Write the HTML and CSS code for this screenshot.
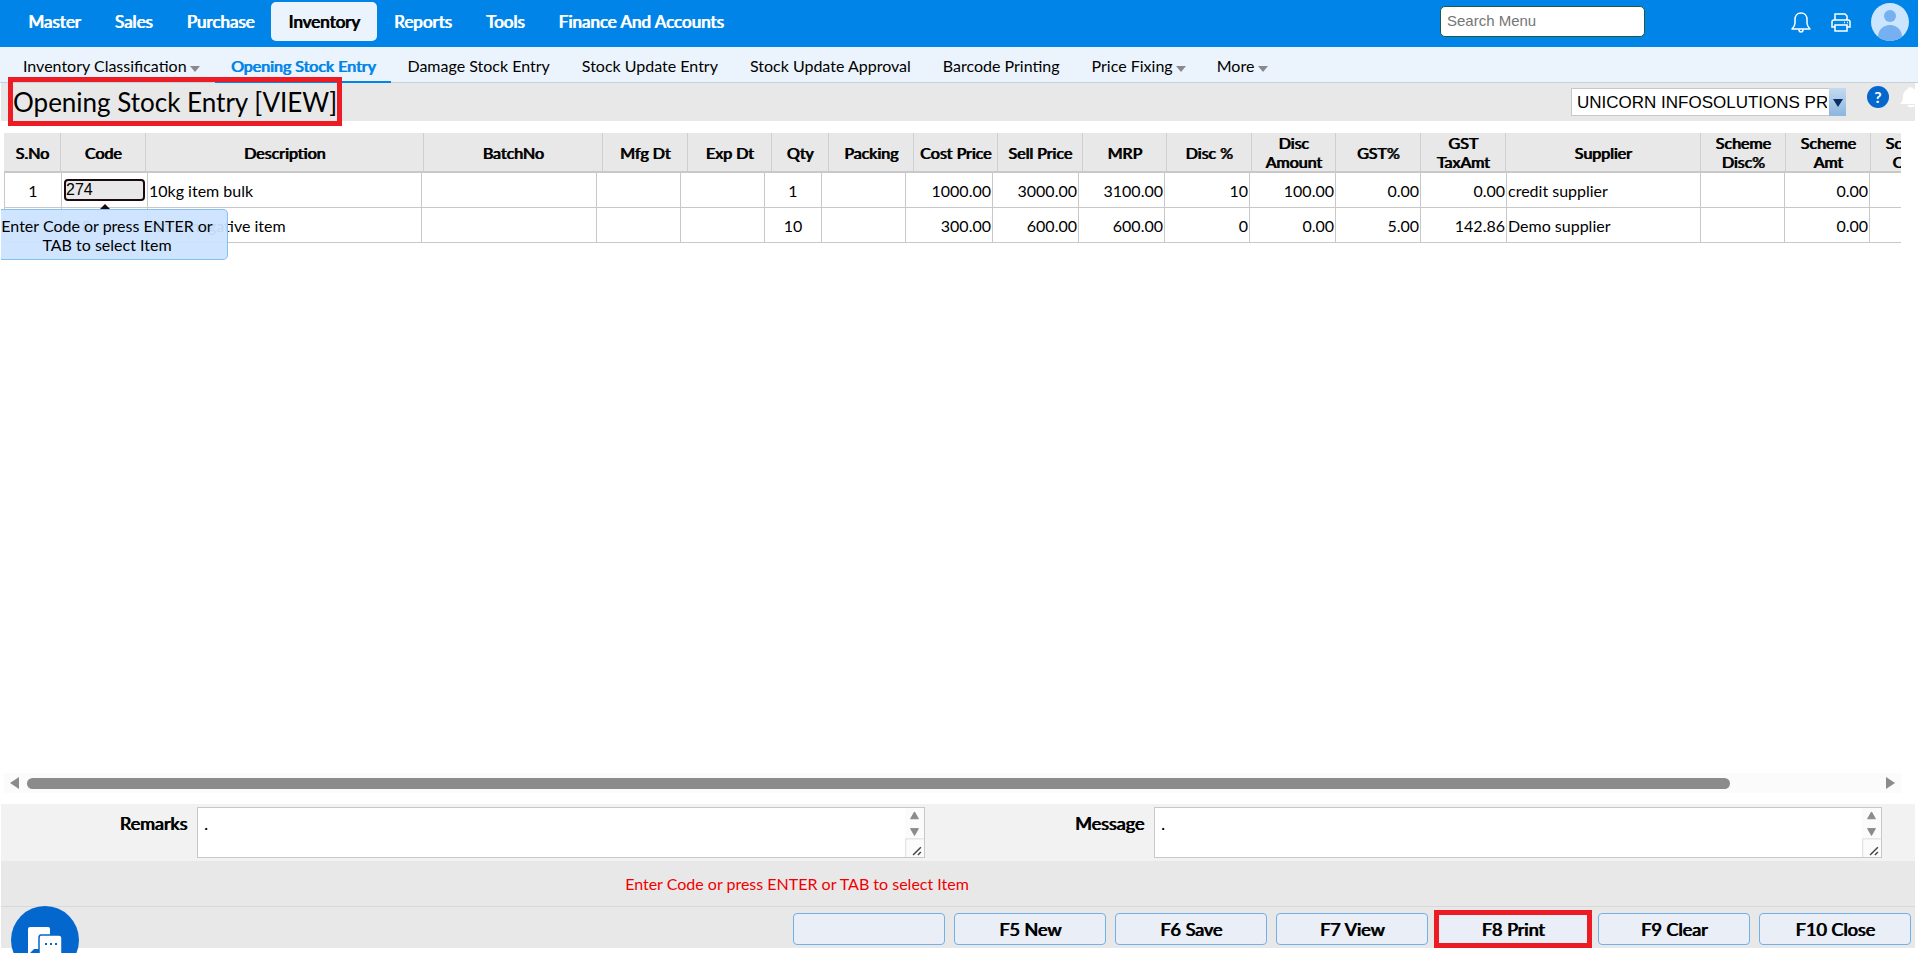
FILE: index.html
```html
<!DOCTYPE html>
<html lang="en">
<head>
  <meta charset="UTF-8">
  <title>Opening Stock Entry</title>
  <link rel="stylesheet" href="styles.css">
</head>
<body>

<header class="topbar">
  <nav class="main-menu">
    <a href="#">Master</a>
    <a href="#">Sales</a>
    <a href="#">Purchase</a>
    <a href="#" class="active">Inventory</a>
    <a href="#">Reports</a>
    <a href="#">Tools</a>
    <a href="#">Finance And Accounts</a>
  </nav>
  <input type="text" class="search" placeholder="Search Menu" aria-label="Search Menu">
  <div class="top-icons">
    <button type="button" class="icon-btn" aria-label="Notifications">
      <svg width="20" height="21" viewBox="0 0 20 21" fill="none" stroke="#fff" stroke-width="1.5" stroke-linejoin="round">
        <path d="M1 17h18c-2-2-3-3.500-3-6V7.500C16 3.500 13.500 1 10 1S4 3.500 4 7.500V11c0 2.500-1 4-3 6z"/>
        <path d="M8 17.500c0 1.500 1 2.500 2 2.500s2-1 2-2.500"/>
      </svg>
    </button>
    <button type="button" class="icon-btn" aria-label="Print">
      <svg width="20" height="19" viewBox="0 0 20 19" fill="none" stroke="#fff" stroke-width="1.500">
        <path d="M4 7V1h10l2 2v4"/>
        <path d="M4 14H1V9c0-1 1-2 2-2h14c1 0 2 1 2 2v5h-3"/>
        <path d="M4 12h12v6H4z"/>
        <path d="M13 9.500h1M16 9.500h1"/>
      </svg>
    </button>
    <button type="button" class="icon-btn" aria-label="Profile">
      <svg width="38" height="38" viewBox="0 0 38 38">
        <defs><clipPath id="face"><circle cx="19" cy="19" r="19"/></clipPath></defs>
        <circle cx="19" cy="19" r="19" fill="#cce5fe"/>
        <g fill="#76b0f0" clip-path="url(#face)">
          <circle cx="19" cy="13" r="6"/>
          <path d="M7 38v-4c0-7 5-12 12-12s12 5 12 12v4z"/>
        </g>
      </svg>
    </button>
  </div>
</header>

<nav class="sub-menu">
  <a href="#">Inventory Classification <i class="caret"></i></a>
  <a href="#" class="active">Opening Stock Entry</a>
  <a href="#">Damage Stock Entry</a>
  <a href="#">Stock Update Entry</a>
  <a href="#">Stock Update Approval</a>
  <a href="#">Barcode Printing</a>
  <a href="#">Price Fixing <i class="caret"></i></a>
  <a href="#">More <i class="caret"></i></a>
</nav>

<div class="title-bar">
  <h1>Opening Stock Entry [VIEW]</h1>
  <div class="company">
    <select aria-label="Company">
      <option>UNICORN INFOSOLUTIONS PRIVATE LIMITED</option>
    </select>
    <span class="company-arrow"></span>
  </div>
  <button type="button" class="help" aria-label="Help">?</button>
  <svg class="alert-bell" width="15" height="22" viewBox="0 0 15 22" fill="#fff">
    <path d="M0 18c2-2 3-4 3-7 0-4 2-7 5-8 0-2 3-3 4-1 2 1 3 1 3 2v14z"/>
    <path d="M7 19h8v1c-2 2-7 2-8-1z"/>
  </svg>
</div>

<main class="grid-area">
  <div class="grid">
    <table class="grid-head">
      <colgroup>
        <col style="width:57px"><col style="width:85px"><col style="width:278px"><col style="width:179px"><col style="width:85px"><col style="width:84px"><col style="width:57px"><col style="width:85px"><col style="width:84px"><col style="width:85px"><col style="width:84px"><col style="width:85px"><col style="width:84px"><col style="width:85px"><col style="width:85px"><col style="width:195px"><col style="width:85px"><col style="width:85px"><col style="width:85px">
      </colgroup>
      <tr>
        <th>S.No</th>
        <th>Code</th>
        <th>Description</th>
        <th>BatchNo</th>
        <th>Mfg Dt</th>
        <th>Exp Dt</th>
        <th>Qty</th>
        <th>Packing</th>
        <th>Cost Price</th>
        <th>Sell Price</th>
        <th>MRP</th>
        <th>Disc %</th>
        <th>Disc Amount</th>
        <th>GST%</th>
        <th>GST TaxAmt</th>
        <th>Supplier</th>
        <th>Scheme Disc%</th>
        <th>Scheme Amt</th>
        <th>Scheme Other</th>
      </tr>
    </table>
    <table class="grid-body">
      <colgroup>
        <col style="width:58px"><col style="width:86px"><col style="width:274px"><col style="width:175px"><col style="width:84px"><col style="width:84px"><col style="width:57px"><col style="width:84px"><col style="width:87px"><col style="width:86px"><col style="width:86px"><col style="width:85px"><col style="width:86px"><col style="width:85px"><col style="width:86px"><col style="width:194px"><col style="width:84px"><col style="width:85px"><col style="width:85px">
      </colgroup>
      <tr>
        <td class="center">1</td>
        <td class="code-cell">
          <input type="text" class="code" value="274" aria-label="Code" autofocus>
          <div class="tooltip">Enter Code or press ENTER or TAB to select Item</div>
        </td>
        <td>10kg item bulk</td>
        <td></td>
        <td></td>
        <td></td>
        <td class="center">1</td>
        <td></td>
        <td class="num">1000.00</td>
        <td class="num">3000.00</td>
        <td class="num">3100.00</td>
        <td class="num">10</td>
        <td class="num">100.00</td>
        <td class="num">0.00</td>
        <td class="num">0.00</td>
        <td>credit supplier</td>
        <td></td>
        <td class="num">0.00</td>
        <td></td>
      </tr>
      <tr>
        <td class="center">2</td>
        <td>358</td>
        <td>stock negative item</td>
        <td></td>
        <td></td>
        <td></td>
        <td class="center">10</td>
        <td></td>
        <td class="num">300.00</td>
        <td class="num">600.00</td>
        <td class="num">600.00</td>
        <td class="num">0</td>
        <td class="num">0.00</td>
        <td class="num">5.00</td>
        <td class="num">142.86</td>
        <td>Demo supplier</td>
        <td></td>
        <td class="num">0.00</td>
        <td></td>
      </tr>
    </table>
  </div>
  <div class="scrollbar">
    <i class="arrow-left"></i>
    <div class="track"><div class="thumb"></div></div>
    <i class="arrow-right"></i>
  </div>
</main>

<footer>
  <div class="notes">
    <div class="note">
      <label for="remarks">Remarks</label>
      <div class="note-box">
        <textarea id="remarks">.</textarea>
        <svg class="note-scroll" width="19" height="50" viewBox="0 0 19 50">
          <path d="M0 0h19v50H0z" fill="#fbfbfb"/>
          <path d="M9.500 4l4 7h-8zM9.500 28l4-7h-8z" fill="#8b8b8b" stroke="#8b8b8b" stroke-linejoin="round"/>
          <path d="M.5 50V31.500H19" fill="none" stroke="#dcdcdc"/>
          <path d="M8 48l8-8M13 48l3-3" stroke="#444" stroke-width="1.500"/>
        </svg>
      </div>
    </div>
    <div class="note">
      <label for="message">Message</label>
      <div class="note-box">
        <textarea id="message">.</textarea>
        <svg class="note-scroll" width="19" height="50" viewBox="0 0 19 50">
          <path d="M0 0h19v50H0z" fill="#fbfbfb"/>
          <path d="M9.500 4l4 7h-8zM9.500 28l4-7h-8z" fill="#8b8b8b" stroke="#8b8b8b" stroke-linejoin="round"/>
          <path d="M.5 50V31.500H19" fill="none" stroke="#dcdcdc"/>
          <path d="M8 48l8-8M13 48l3-3" stroke="#444" stroke-width="1.500"/>
        </svg>
      </div>
    </div>
  </div>
  <div class="status">Enter Code or press ENTER or TAB to select Item</div>
  <div class="actions">
    <button type="button" aria-label="Empty"></button>
    <button type="button">F5 New</button>
    <button type="button">F6 Save</button>
    <button type="button">F7 View</button>
    <button type="button" class="marked">F8 Print</button>
    <button type="button">F9 Clear</button>
    <button type="button">F10 Close</button>
  </div>
</footer>

<button type="button" class="chat" aria-label="Chat">
  <svg width="36" height="40" viewBox="0 0 36 40">
    <path d="M3 0h18q2 0 2 2v20H7l-6 6V2q0-2 2-2z" fill="#fff"/>
    <path d="M14 8h18q3 0 3 3v26l-6-6H14q-2 0-2-2V11q0-3 2-3z" fill="#fff" stroke="#0367cd" stroke-width="1.500"/>
    <path d="M18 17h2M23 17h2M28 17h2" stroke="#0367cd" stroke-width="2"/>
  </svg>
</button>

</body>
</html>
```

FILE: styles.css
```css
* { box-sizing: border-box; }
body {
  margin: 0;
  height: 100vh;
  display: flex;
  flex-direction: column;
  overflow: hidden;
  font-family: Lato, "Liberation Sans", sans-serif;
  font-size: 16px;
  color: #000;
  background: #fff;
}
a { color: inherit; text-decoration: none; }
button { font-family: inherit; cursor: pointer; }

/* bold look on the regular face */
.main-menu a,
.sub-menu a.active,
.grid-head th,
.note label,
.actions button {
  font-weight: normal;
  text-shadow: 1px 0 0 currentColor;
}

/* top menu */
.topbar {
  display: flex;
  height: 47px;
  padding: 2px 9px 0 11px;
  background: #0084e8;
}
.main-menu { display: flex; flex: 1; }
.main-menu a {
  height: 39px;
  padding: 0 17px;
  line-height: 40px;
  font-size: 17px;
  color: #fff;
  border-radius: 5px;
}
.main-menu a.active { background: #ebf4fc; color: #000; }
.search {
  width: 205px;
  height: 31px;
  margin-top: 4px;
  padding: 0 6px 3px;
  border: 1px solid #1d5c3f;
  border-radius: 5px;
  font: 15px "Liberation Sans", Arial, sans-serif;
}
.top-icons {
  display: flex;
  align-items: center;
  gap: 20px;
  height: 40px;
  margin-left: 146px;
}
.icon-btn { display: flex; padding: 0; border: 0; background: none; }

/* second menu */
.sub-menu {
  display: flex;
  height: 36px;
  padding: 0 7px;
  background: #ebf4fc;
  border-bottom: 1px solid #c3d3de;
}
.sub-menu a {
  height: 36px;
  padding: 0 16px;
  line-height: 38px;
  font-size: 16px;
  white-space: nowrap;
}
.sub-menu a.active { color: #0084e8; border-bottom: 2px solid #0084e8; }
.caret {
  display: inline-block;
  margin: 0 -1px;
  border: 5px solid transparent;
  border-top: 6px solid #8a8a8e;
  border-bottom: 0;
}

/* title */
.title-bar {
  display: flex;
  height: 38px;
  margin: 0 3px 12px 1px;
  background: #e8e8e8;
}
h1 {
  position: relative;
  z-index: 1;
  margin: -6px auto -5px 7px;
  padding-top: 2px;
  border: 5px solid #ed1c24;
  line-height: 37px;
  font-size: 26px;
  font-weight: normal;
}
.company {
  position: relative;
  width: 275px;
  height: 28px;
  margin-top: 5px;
}
.company select {
  appearance: none;
  width: 100%;
  height: 28px;
  padding: 0 18px 0 5px;
  border: 1px solid #c8c8c8;
  border-radius: 0;
  background: #fff;
  font: 17px "Liberation Sans", Arial, sans-serif;
  color: #000;
}
.company-arrow {
  position: absolute;
  top: 0;
  right: 0;
  width: 17px;
  height: 28px;
  background: linear-gradient(#c3dbf0, #8db5df);
  pointer-events: none;
}
.company-arrow::after {
  content: "";
  position: absolute;
  top: 11px;
  left: 4px;
  border: 5px solid transparent;
  border-top: 8px solid #0c2f66;
  border-bottom: 0;
}
.help {
  width: 22px;
  height: 22px;
  margin: 3px 11px 0 21px;
  padding: 0;
  border: 0;
  border-radius: 50%;
  background: #0367cd;
  color: #fff;
  font-size: 16px;
  font-weight: bold;
  line-height: 22px;
}
.alert-bell { margin-top: 3px; }

/* item grid */
.grid-area {
  flex: 1;
  display: flex;
  flex-direction: column;
  margin: 0 17px 11px 0;
}
.grid { flex: 1; padding-left: 4px; overflow-x: clip; }
table {
  width: 1917px;
  table-layout: fixed;
  border-collapse: separate;
  border-spacing: 0;
}
.grid-head { background: #e8e8e8; border-bottom: 2px solid #c8c8c8; }
.grid-head th {
  height: 38px;
  padding: 0 4px;
  border-right: 1px solid #cfcfcf;
  font-size: 16px;
  line-height: 19px;
}
.grid-body td {
  height: 35px;
  padding: 0 1px;
  border: 1px solid #c8c8c8;
  border-width: 0 1px 1px 0;
  font-size: 16px;
  white-space: nowrap;
}
.grid-body td:first-child { border-left-width: 1px; }
.grid-body .center { text-align: center; }
.grid-body .num { text-align: right; }
.grid-body .code-cell { position: relative; padding: 0 2px; }
.code {
  display: block;
  width: 81px;
  height: 22px;
  padding: 0;
  border: 2px solid #1a0a0f;
  border-radius: 4px;
  outline: 0;
  background: #e8e8e8;
  font: 16px "Liberation Sans", Arial, sans-serif;
}
.tooltip {
  position: absolute;
  top: 36px;
  left: -61px;
  width: 227px;
  padding: 6px 14px 5px 0;
  border: 1px solid #85c0f0;
  border-left: 0;
  border-radius: 0 5px 5px 0;
  background: rgba(204, 227, 255, 0.94);
  line-height: 19px;
  text-align: center;
  white-space: normal;
}
.tooltip::before {
  content: "";
  position: absolute;
  top: -6px;
  left: 99px;
  border: 5px solid transparent;
  border-bottom: 5px solid #1a0a0f;
  border-top: 0;
}

.scrollbar {
  display: flex;
  align-items: center;
  height: 20px;
  margin-left: 4px;
  padding: 0 6px;
  background: #fbfbfb;
}
.arrow-left, .arrow-right { border: 6px solid transparent; }
.arrow-left { border-right: 9px solid #8b8b8b; border-left: 0; }
.arrow-right { border-left: 9px solid #8b8b8b; border-right: 0; }
.track { flex: 1; margin: 0 8px; }
.thumb { width: 92%; height: 11px; border-radius: 6px; background: #8b8b8b; }

/* remarks, status, buttons */
footer { margin: 0 3px 5px 1px; background: #e8e8e8; }
.notes { display: flex; background: #f2f2f2; }
.note { flex: 1; display: flex; padding: 3px 33px 3px 0; }
.note label {
  width: 186px;
  margin-right: 10px;
  padding-top: 5px;
  text-align: right;
  font-size: 18px;
}
.note-box { position: relative; flex: 1; height: 51px; }
textarea {
  display: block;
  width: 100%;
  height: 51px;
  padding: 4px 6px;
  border: 1px solid #c8c8c8;
  resize: none;
  overflow: hidden;
  font: 18px Lato, "Liberation Sans", sans-serif;
}
.note-scroll { position: absolute; top: 1px; right: 1px; height: 49px; }
.status {
  height: 46px;
  padding-right: 322px;
  border-bottom: 1px solid #d8d8d8;
  line-height: 45px;
  text-align: center;
  color: #f00000;
}
.actions {
  display: flex;
  justify-content: flex-end;
  gap: 9px;
  padding: 6px 4px 3px;
}
.actions button {
  width: 152px;
  height: 32px;
  padding: 0;
  border: 1px solid #72b0ea;
  border-radius: 4px;
  background: #e9eef7;
  font-size: 18px;
  color: #000;
}
.actions .marked { outline: 5px solid #ed1c24; outline-offset: -2px; border-radius: 0; }

.chat {
  position: fixed;
  left: 11px;
  bottom: -21px;
  width: 68px;
  height: 68px;
  padding: 16px 0 0;
  border: 0;
  border-radius: 50%;
  background: #0367cd;
}
```
